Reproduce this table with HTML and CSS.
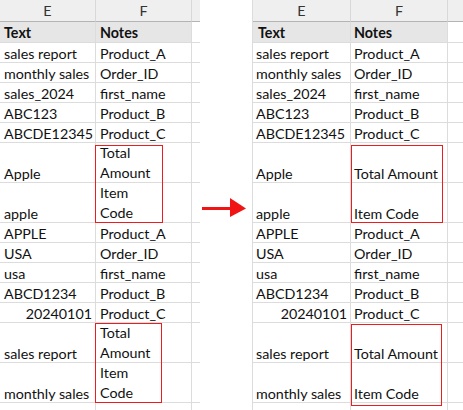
FILE: index.html
```html
<!DOCTYPE html>
<html lang="en">
<head>
    <meta charset="UTF-8">
    <meta name="viewport" content="width=device-width, initial-scale=1.0">
    <title>Wrap text before and after</title>
    <link rel="stylesheet" href="styles.css">
</head>
<body>
    <div class="page">
        <!-- before: wrapped cells -->
        <div class="sheet before">
            <div class="col-head">E</div>
            <div class="col-head">F</div>
            <div class="col-head last"></div>

            <div class="cell title">Text</div>
            <div class="cell title">Notes</div>
            <div class="cell last"></div>

            <div class="cell">sales report</div>
            <div class="cell">Product_A</div>
            <div class="cell last"></div>

            <div class="cell">monthly sales</div>
            <div class="cell">Order_ID</div>
            <div class="cell last"></div>

            <div class="cell">sales_2024</div>
            <div class="cell">first_name</div>
            <div class="cell last"></div>

            <div class="cell">ABC123</div>
            <div class="cell">Product_B</div>
            <div class="cell last"></div>

            <div class="cell">ABCDE12345</div>
            <div class="cell">Product_C</div>
            <div class="cell last"></div>

            <div class="cell tall">Apple</div>
            <div class="cell tall wrap">Total<br>Amount</div>
            <div class="cell tall last"></div>

            <div class="cell tall">apple</div>
            <div class="cell tall wrap">Item<br>Code</div>
            <div class="cell tall last"></div>

            <div class="cell">APPLE</div>
            <div class="cell">Product_A</div>
            <div class="cell last"></div>

            <div class="cell">USA</div>
            <div class="cell">Order_ID</div>
            <div class="cell last"></div>

            <div class="cell">usa</div>
            <div class="cell">first_name</div>
            <div class="cell last"></div>

            <div class="cell">ABCD1234</div>
            <div class="cell">Product_B</div>
            <div class="cell last"></div>

            <div class="cell num">20240101</div>
            <div class="cell">Product_C</div>
            <div class="cell last"></div>

            <div class="cell tall">sales report</div>
            <div class="cell tall wrap">Total<br>Amount</div>
            <div class="cell tall last"></div>

            <div class="cell tall">monthly sales</div>
            <div class="cell tall wrap">Item<br>Code</div>
            <div class="cell tall last"></div>

            <div class="cell"></div>
            <div class="cell"></div>
            <div class="cell last"></div>

            <div class="mark mark-1"></div>
            <div class="mark mark-2"></div>
        </div>

        <div class="arrow">
            <svg width="46" height="20" viewBox="0 0 46 20">
                <rect x="0" y="9" width="30" height="3" fill="#f01414"/>
                <polygon points="28,0 44,10.5 28,19" fill="#f01414"/>
            </svg>
        </div>

        <!-- after: one line per cell -->
        <div class="sheet after">
            <div class="col-head">E</div>
            <div class="col-head">F</div>
            <div class="col-head last"></div>

            <div class="cell title">Text</div>
            <div class="cell title">Notes</div>
            <div class="cell last"></div>

            <div class="cell">sales report</div>
            <div class="cell">Product_A</div>
            <div class="cell last"></div>

            <div class="cell">monthly sales</div>
            <div class="cell">Order_ID</div>
            <div class="cell last"></div>

            <div class="cell">sales_2024</div>
            <div class="cell">first_name</div>
            <div class="cell last"></div>

            <div class="cell">ABC123</div>
            <div class="cell">Product_B</div>
            <div class="cell last"></div>

            <div class="cell">ABCDE12345</div>
            <div class="cell">Product_C</div>
            <div class="cell last"></div>

            <div class="cell tall">Apple</div>
            <div class="cell tall">Total Amount</div>
            <div class="cell tall last"></div>

            <div class="cell tall">apple</div>
            <div class="cell tall">Item Code</div>
            <div class="cell tall last"></div>

            <div class="cell">APPLE</div>
            <div class="cell">Product_A</div>
            <div class="cell last"></div>

            <div class="cell">USA</div>
            <div class="cell">Order_ID</div>
            <div class="cell last"></div>

            <div class="cell">usa</div>
            <div class="cell">first_name</div>
            <div class="cell last"></div>

            <div class="cell">ABCD1234</div>
            <div class="cell">Product_B</div>
            <div class="cell last"></div>

            <div class="cell num">20240101</div>
            <div class="cell">Product_C</div>
            <div class="cell last"></div>

            <div class="cell tall">sales report</div>
            <div class="cell tall">Total Amount</div>
            <div class="cell tall last"></div>

            <div class="cell tall">monthly sales</div>
            <div class="cell tall">Item Code</div>
            <div class="cell tall last"></div>

            <div class="cell"></div>
            <div class="cell"></div>
            <div class="cell last"></div>

            <div class="mark mark-1"></div>
            <div class="mark mark-2"></div>
        </div>
    </div>
</body>
</html>
```

FILE: styles.css
```css
* {
    margin: 0;
    padding: 0;
    box-sizing: border-box;
}
html, body {
    height: 100%;
    background: #fff;
    overflow: hidden;
}
body {
    font-family: Lato, "Liberation Sans", sans-serif;
    font-size: 14.3px;
    color: #111;
}
.page {
    display: flex;
    width: 463px;
    height: 410px;
}
.sheet {
    position: relative;
    display: grid;
    grid-template-rows: 22px 21px;
    grid-auto-rows: 20px;
    align-content: start;
}
.before {
    width: 200px;
    grid-template-columns: 96px 96px 8px;
}
.after {
    width: 211px;
    grid-template-columns: 98px 97px 16px;
    border-left: 1px solid #dcdcdc;
}
.arrow {
    width: 52px;
    padding: 198px 0 0 2px;
}
.arrow svg {
    display: block;
}
.col-head {
    background: #efefef;
    border-right: 1px solid #d8d8d8;
    border-bottom: 1px solid #b4b4b4;
    color: #333;
    text-align: center;
    line-height: 21px;
}
.cell {
    border-right: 1px solid #dcdcdc;
    border-bottom: 1px solid #dcdcdc;
    padding: 1px 0 0 4px;
    line-height: 20px;
    white-space: nowrap;
}
.after .cell {
    padding-left: 5px;
}
.after .cell + .cell {
    padding-left: 3px;
}
.last {
    border-right: none;
}
.title {
    background: #e6e6e6;
    font-weight: bold;
}
.tall {
    grid-row: span 2;
    padding-top: 21px;
}
.wrap {
    padding-top: 0;
    white-space: normal;
}
.num {
    text-align: right;
    padding-right: 3px;
}
.mark {
    position: absolute;
    border: 1px solid #ee1c1c;
}
.before .mark-1 {
    left: 95px;
    top: 145px;
    width: 68px;
    height: 78px;
}
.before .mark-2 {
    left: 95px;
    top: 323px;
    width: 67px;
    height: 80px;
}
.after .mark-1 {
    left: 98px;
    top: 145px;
    width: 92px;
    height: 78px;
}
.after .mark-2 {
    left: 98px;
    top: 324px;
    width: 91px;
    height: 82px;
}
```
